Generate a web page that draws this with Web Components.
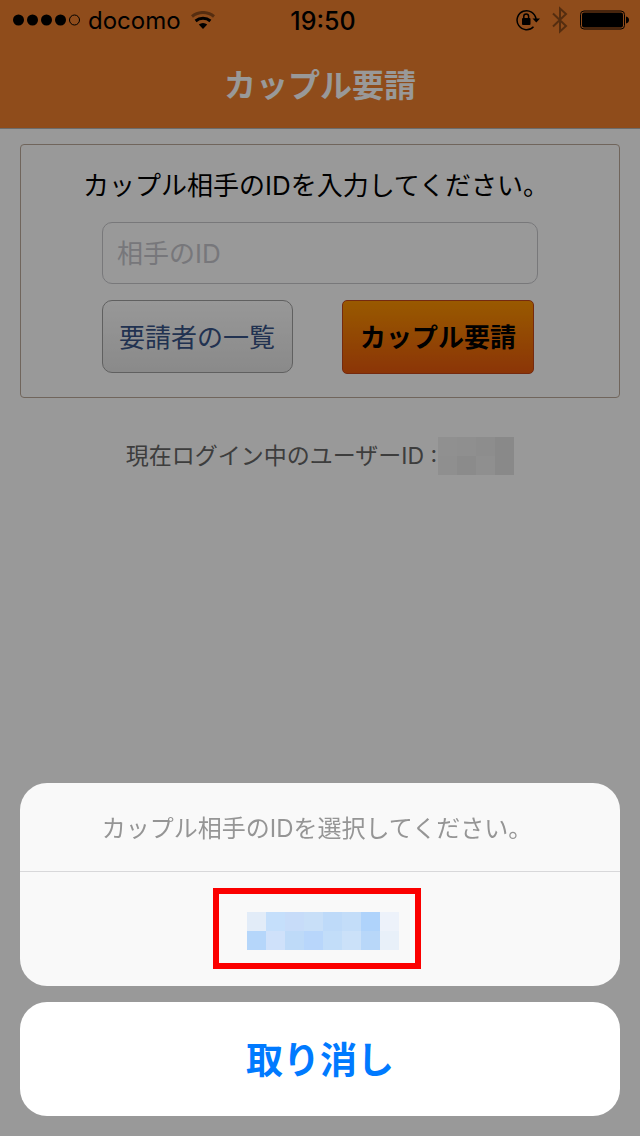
<!DOCTYPE html>
<html lang="ja">
<head>
<meta charset="utf-8">
<meta name="viewport" content="width=device-width">
<title>カップル要請</title>
<style>
  body { margin: 0; min-height: 100vh; background: #fff; font-family: Inter, "Noto Sans CJK JP", sans-serif; }
</style>
</head>
<body>
<couple-app></couple-app>
<script>
const define = (name, html) => {
  const t = document.createElement('template');
  t.innerHTML = html;
  customElements.define(name, class extends HTMLElement {
    constructor() {
      super();
      this.attachShadow({ mode: 'open' }).append(t.content.cloneNode(true));
    }
  });
};

/* Censored value: rows of cell colours, separated by "/" */
customElements.define('pixel-mosaic', class extends HTMLElement {
  connectedCallback() {
    const rows = this.getAttribute('cells').split('/').map(r => r.trim().split(/\s+/));
    const s = 19, w = rows[0].length * s, h = rows.length * s;
    const rects = rows.map((r, y) => r.map((c, x) =>
      `<rect x="${x * s}" y="${y * s}" width="${s}" height="${s}" fill="#${c}"/>`).join('')).join('');
    this.attachShadow({ mode: 'open' }).innerHTML =
      `<style>:host{display:block}svg{display:block}</style>
       <svg width="${w}" height="${h}" viewBox="0 0 ${w} ${h}" shape-rendering="crispEdges" aria-hidden="true">${rects}</svg>`;
  }
});

define('status-bar', `
<style>
  :host { display: grid; grid-template-columns: 1fr auto 1fr; align-items: center; height: 40px;
    padding: 0 11px 0 13px; color: #000; font-size: 24px; line-height: 40px; }
  div { display: flex; align-items: center; }
  span { padding-top: 2px; line-height: 38px; }
  .left { gap: 8px; }
  .left svg:last-child { margin-left: 2px; }
  .right { justify-content: flex-end; gap: 12px; }
  .time { font-size: 25px; font-weight: 500; padding-left: 4px; }
  svg { display: block; }
</style>
<div class="left">
  <svg width="67" height="12" viewBox="0 0 67 12"><circle cx="5.5" cy="6" r="5.5"/><circle cx="19.5" cy="6" r="5.5"/><circle cx="33.5" cy="6" r="5.5"/><circle cx="47.5" cy="6" r="5.5"/><circle cx="61.5" cy="6" r="5" fill="none" stroke="#000"/></svg>
  <span>docomo</span>
  <svg width="24" height="18" viewBox="0 0 24 18" fill="none" stroke="#000" stroke-width="3">
    <path d="M1 5.500a17 17 0 0 1 22 0" opacity=".4"/><path d="M4.600 10a11.500 11.500 0 0 1 14.800 0"/><path d="M12 18l-4.200-4.400a6 6 0 0 1 8.400 0z" fill="#000" stroke="none"/></svg>
</div>
<div class="time"><span>19:50</span></div>
<div class="right">
  <svg width="24" height="22" viewBox="0 0 24 22"><path d="M17.500 17.700a9.500 9.500 0 1 1 2.500-7.700" fill="none" stroke="#000" stroke-width="1.500"/><path d="M16.500 9.500h7.500l-3.700 4z"/><rect x="6" y="9" width="8.500" height="7" rx="1"/><path d="M7.800 9.500V7.300a2.400 2.400 0 0 1 4.800 0v2.200" fill="none" stroke="#000" stroke-width="1.500"/></svg>
  <svg width="16" height="28" viewBox="0 0 16 28" fill="none" stroke="#000" stroke-width="2" opacity=".4"><path d="M1 7.500l13 12.500-6 5.500v-23l6 5.500L1 20.500"/></svg>
  <svg width="49" height="20" viewBox="0 0 49 20"><rect x=".5" y="1" width="44" height="18" rx="3.500" fill="none" stroke="#000"/><rect x="2" y="2.500" width="41" height="15" rx="2"/><path d="M46 6.500q3 .7 3 3.500t-3 3.500z"/></svg>
</div>`);

define('page-header', `
<style>
  :host { display: block; background: #ef7f2d; border-bottom: 1px solid #b4b4b4; }
  h1 { margin: 0; padding-top: 4px; text-align: center; color: #fff; font-size: 32px; line-height: 84px; font-weight: 700; }
</style>
<status-bar></status-bar>
<h1><slot></slot></h1>`);

define('request-form', `
<style>
  :host { display: block; margin: 15px 20px 0; }
  form { border: 1px solid #bba999; border-radius: 4px; padding: 21px 81px 23px; }
  label { display: block; margin: 0 -56px 16px -64px; text-align: center; color: #000; font-size: 26px; line-height: 40px; }
  input { display: block; box-sizing: border-box; width: 100%; height: 62px; padding: 0 14px; border: 1px solid #c8c8cc;
    border-radius: 10px; background: #fff; font: inherit; font-size: 26px; color: #000; }
  input::placeholder { color: #c7c7cd; opacity: 1; }
  .row { display: flex; justify-content: space-between; align-items: flex-start; margin-top: 16px; padding-right: 4px; }
  button { height: 74px; padding: 2px 17px 0; font: inherit; font-size: 26px; line-height: 40px; white-space: nowrap; }
  .list { height: 73px; padding: 2px 17px 0 16px; border: 1px solid #a0a0a0; border-radius: 10px; color: #385487; background: linear-gradient(#fdfdfd, #e6e6e6); }
  .send { border: 1px solid #c4461a; border-radius: 5px; color: #000; font-weight: 700; background: linear-gradient(#ff9500, #e8590c); }
</style>
<form>
  <label for="partner">カップル相手のIDを入力してください。</label>
  <input id="partner" type="text" placeholder="相手のID">
  <div class="row">
    <button type="button" class="list">要請者の一覧</button>
    <button type="button" class="send">カップル要請</button>
  </div>
</form>`);

define('login-info', `
<style>
  :host { display: flex; justify-content: center; align-items: center; gap: 1px; margin-top: 39px;
    color: #666; font-size: 23px; line-height: 38px; }
</style>
<slot></slot>
<pixel-mosaic cells="f0f0f0 efefef ececec e4e4e4/efefef e8e8e8 eeeeee e5e5e5"></pixel-mosaic>`);

define('action-sheet', `
<style>
  :host { position: fixed; inset: 0; display: flex; flex-direction: column; justify-content: flex-end; gap: 16px;
    padding: 20px; background: rgba(0,0,0,.4); }
  section { border-radius: 27px; background: #f9f9f9; overflow: hidden; }
  p { margin: 0; padding: 4px 6px 0 0; border-bottom: 1px solid #d8d8da; text-align: center; color: #959595; font-size: 24px; line-height: 84px; }
  button { display: flex; justify-content: center; align-items: center; width: 100%; height: 114px; border: 0; font: inherit; }
  .option { padding: 0 6px 2px 0; background: none; }
  .mark { display: block; border: 6px solid #fb0000; padding: 18px 16px 13px 28px; }
  .cancel { padding: 0 0 2px; border-radius: 27px; background: #fff; color: #007aff; font-size: 37px; font-weight: 700; }
</style>
<section>
  <p><slot></slot></p>
  <button type="button" class="option" aria-label="ID"><span class="mark">
    <pixel-mosaic cells="e2ecf8 c5dffb c7dcf9 c8dff8 bedaf9 c3ddf9 afd3fb edf2fa/b5d6fa cfe1fa bedaf8 b8d6fb c2ddf9 cbe1f9 b8d7f9 e8f0f9"></pixel-mosaic>
  </span></button>
</section>
<button type="button" class="cancel">取り消し</button>`);

define('couple-app', `
<style>:host { display: block; }</style>
<page-header>カップル要請</page-header>
<main>
  <request-form></request-form>
  <login-info><span>現在ログイン中のユーザーID :</span></login-info>
</main>
<action-sheet role="dialog">カップル相手のIDを選択してください。</action-sheet>`);
</script>
</body>
</html>
